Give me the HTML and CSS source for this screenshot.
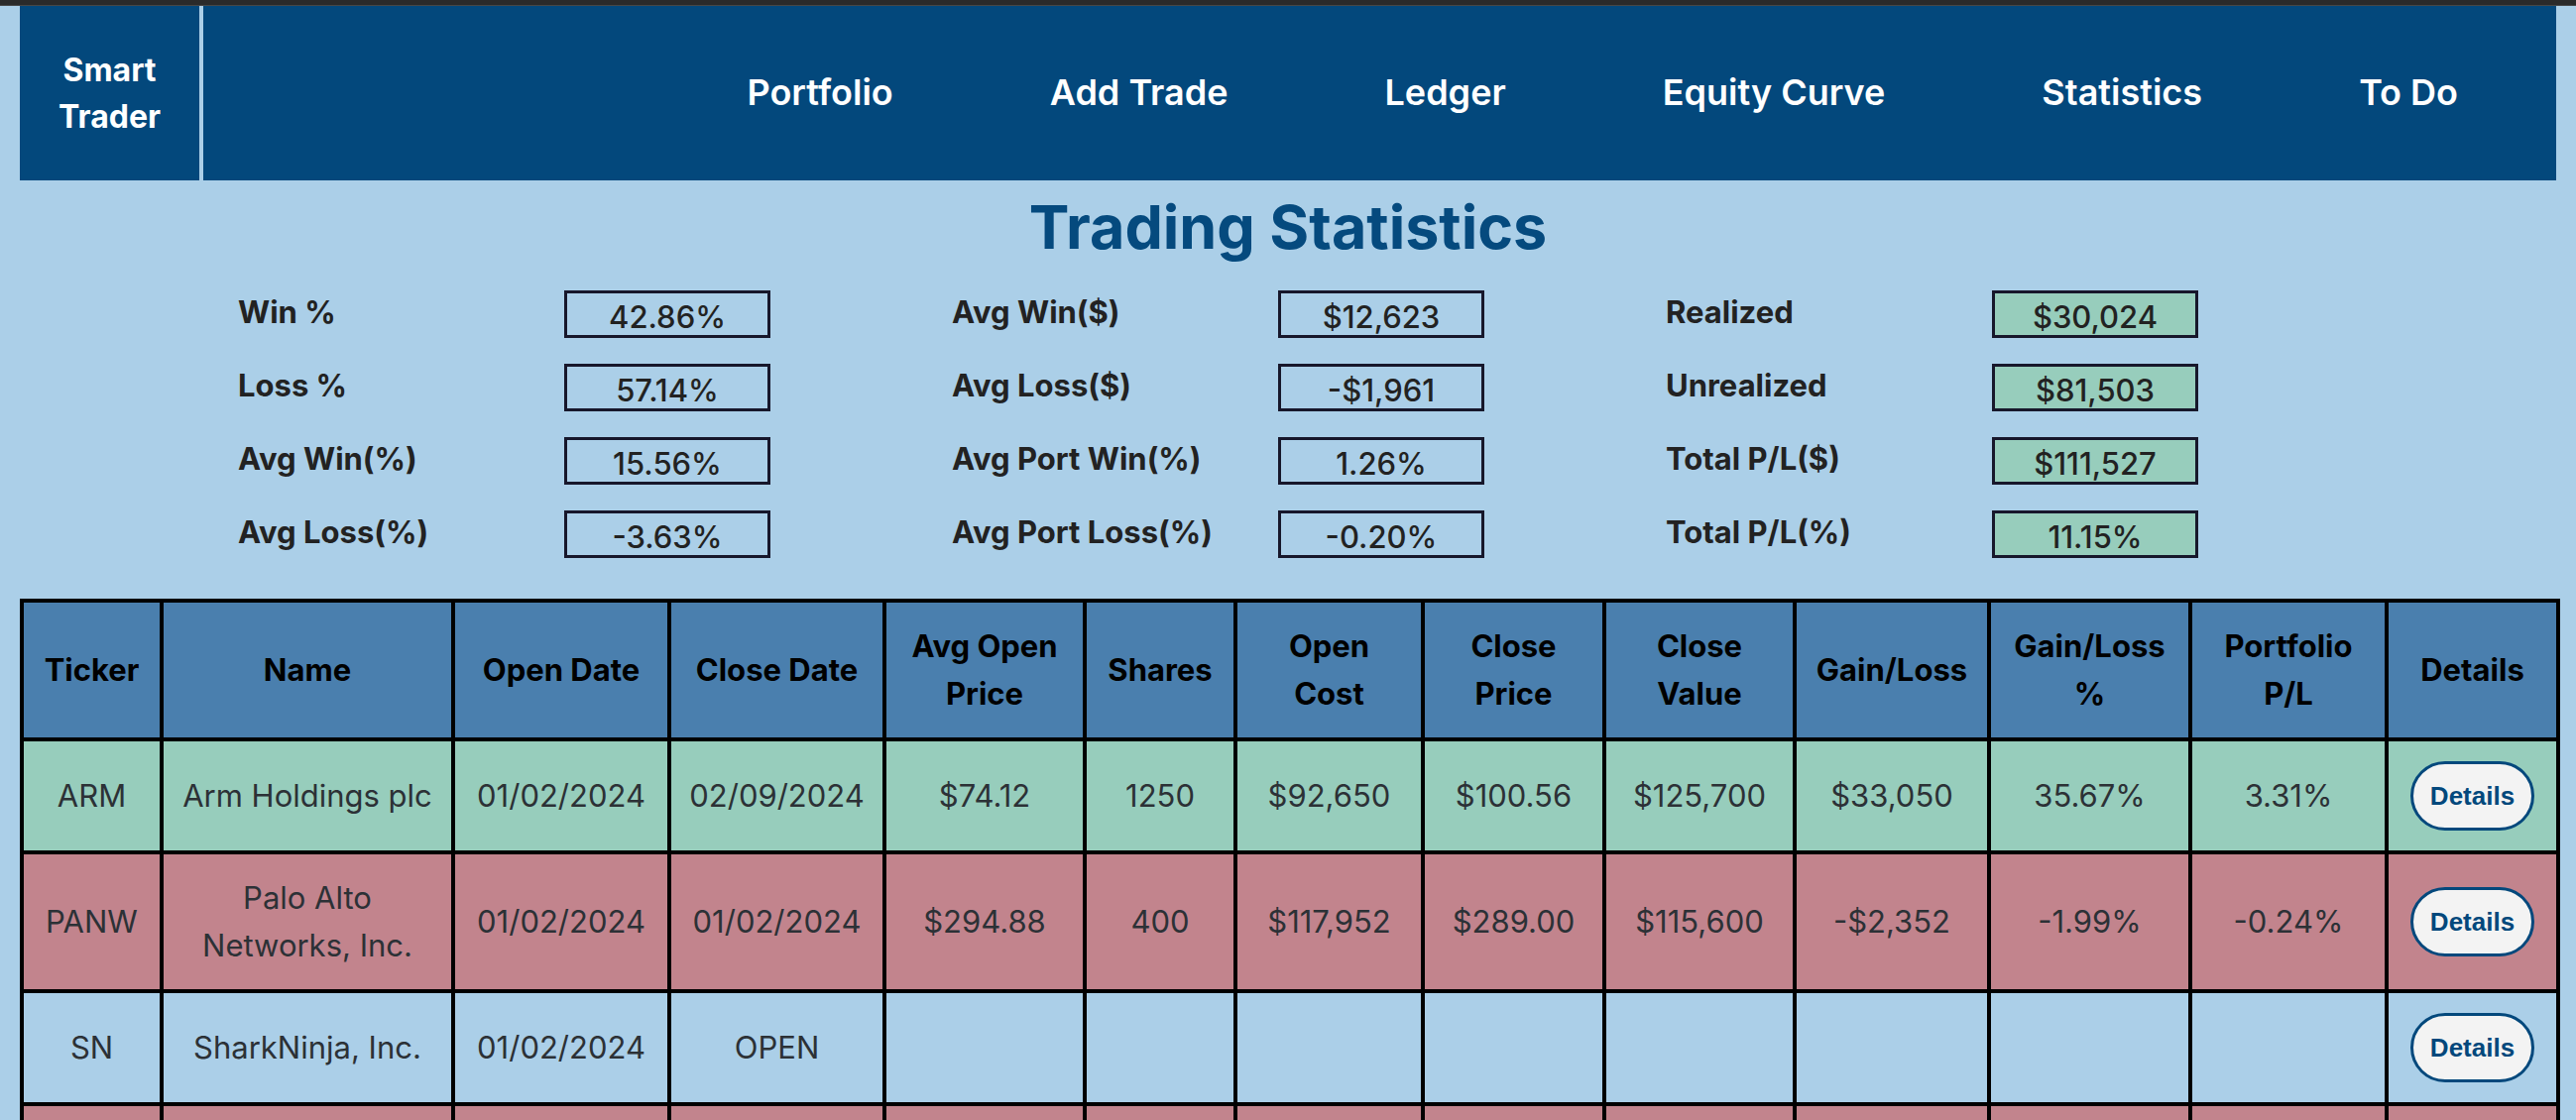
FILE: index.html
```html
<!DOCTYPE html>
<html lang="en">
<head>
  <meta charset="UTF-8" />
  <meta name="viewport" content="width=device-width, initial-scale=1.0"/>
  <title>Smart Trader - Statistics</title>
  <link rel="stylesheet" href="styles.css">
</head>
<body>

  <div class="topbar"></div>

  <div class="page">
    <nav class="navbar">
      <div class="brand">Smart<br>Trader</div>
      <ul class="nav-links">
        <li><a href="#">Portfolio</a></li>
        <li><a href="#">Add Trade</a></li>
        <li><a href="#">Ledger</a></li>
        <li><a href="#">Equity Curve</a></li>
        <li><a href="#">Statistics</a></li>
        <li><a href="#">To Do</a></li>
      </ul>
    </nav>

    <h1 class="title">Trading Statistics</h1>

    <div class="stats">
      <div class="stat-group">
        <div class="stat-label">Win %</div>
        <div class="stat-box">42.86%</div>
        <div class="stat-label">Loss %</div>
        <div class="stat-box">57.14%</div>
        <div class="stat-label">Avg Win(%)</div>
        <div class="stat-box">15.56%</div>
        <div class="stat-label">Avg Loss(%)</div>
        <div class="stat-box">-3.63%</div>
      </div>
      <div class="stat-group">
        <div class="stat-label">Avg Win($)</div>
        <div class="stat-box">$12,623</div>
        <div class="stat-label">Avg Loss($)</div>
        <div class="stat-box">-$1,961</div>
        <div class="stat-label">Avg Port Win(%)</div>
        <div class="stat-box">1.26%</div>
        <div class="stat-label">Avg Port Loss(%)</div>
        <div class="stat-box">-0.20%</div>
      </div>
      <div class="stat-group">
        <div class="stat-label">Realized</div>
        <div class="stat-box positive">$30,024</div>
        <div class="stat-label">Unrealized</div>
        <div class="stat-box positive">$81,503</div>
        <div class="stat-label">Total P/L($)</div>
        <div class="stat-box positive">$111,527</div>
        <div class="stat-label">Total P/L(%)</div>
        <div class="stat-box positive">11.15%</div>
      </div>
    </div>

    <table class="trade-table">
      <colgroup>
        <col style="width: 141px">
        <col style="width: 294px">
        <col style="width: 218px">
        <col style="width: 217px">
        <col style="width: 202px">
        <col style="width: 152px">
        <col style="width: 189px">
        <col style="width: 183px">
        <col style="width: 192px">
        <col style="width: 196px">
        <col style="width: 203px">
        <col style="width: 198px">
        <col style="width: 173px">
      </colgroup>
      <thead>
        <tr>
          <th>Ticker</th>
          <th>Name</th>
          <th>Open Date</th>
          <th>Close Date</th>
          <th>Avg Open Price</th>
          <th>Shares</th>
          <th>Open Cost</th>
          <th>Close Price</th>
          <th>Close Value</th>
          <th>Gain/Loss</th>
          <th>Gain/Loss %</th>
          <th>Portfolio P/L</th>
          <th>Details</th>
        </tr>
      </thead>
      <tbody>
        <tr class="win">
          <td>ARM</td>
          <td>Arm Holdings plc</td>
          <td>01/02/2024</td>
          <td>02/09/2024</td>
          <td>$74.12</td>
          <td>1250</td>
          <td>$92,650</td>
          <td>$100.56</td>
          <td>$125,700</td>
          <td>$33,050</td>
          <td>35.67%</td>
          <td>3.31%</td>
          <td><button class="details-btn">Details</button></td>
        </tr>
        <tr class="loss">
          <td>PANW</td>
          <td>Palo Alto Networks, Inc.</td>
          <td>01/02/2024</td>
          <td>01/02/2024</td>
          <td>$294.88</td>
          <td>400</td>
          <td>$117,952</td>
          <td>$289.00</td>
          <td>$115,600</td>
          <td>-$2,352</td>
          <td>-1.99%</td>
          <td>-0.24%</td>
          <td><button class="details-btn">Details</button></td>
        </tr>
        <tr class="open">
          <td>SN</td>
          <td>SharkNinja, Inc.</td>
          <td>01/02/2024</td>
          <td>OPEN</td>
          <td></td>
          <td></td>
          <td></td>
          <td></td>
          <td></td>
          <td></td>
          <td></td>
          <td></td>
          <td><button class="details-btn">Details</button></td>
        </tr>
        <tr class="loss">
          <td>SNOW</td>
          <td>Snowflake Inc.</td>
          <td>01/03/2024</td>
          <td>01/05/2024</td>
          <td>$193.40</td>
          <td>300</td>
          <td>$58,020</td>
          <td>$187.75</td>
          <td>$56,325</td>
          <td>-$1,695</td>
          <td>-2.92%</td>
          <td>-0.17%</td>
          <td><button class="details-btn">Details</button></td>
        </tr>
      </tbody>
    </table>
  </div>

</body>
</html>
```

FILE: styles.css
```css
* {
  box-sizing: border-box;
  margin: 0;
  padding: 0;
}

body {
  background-color: #abcfe8;
  font-family: Inter, "Noto Sans", sans-serif;
  color: #2c3136;
  line-height: 1.6;
}

.topbar {
  height: 6px;
  background-color: #2a2a2a;
  border-bottom: 1px solid #474747;
}

.page {
  padding: 0 20px;
}

/* navigation */
.navbar {
  display: flex;
  align-items: stretch;
  height: 176px;
  background-color: #03487c;
  color: #fff;
}

.brand {
  width: 185px;
  display: flex;
  align-items: center;
  justify-content: center;
  text-align: center;
  font-size: 32px;
  font-weight: 700;
  line-height: 47px;
  border-right: 4px solid #abcfe8;
}

.nav-links {
  flex: 1;
  display: flex;
  align-items: center;
  justify-content: flex-end;
  gap: 158px;
  padding-right: 99px;
  list-style: none;
}

.nav-links a {
  color: #fff;
  text-decoration: none;
  font-size: 36px;
  font-weight: 600;
}

/* stats */
.title {
  text-align: center;
  color: #054a7e;
  font-size: 61px;
  font-weight: 700;
  line-height: 1.2;
  margin-top: 11px;
}

.stats {
  display: flex;
  padding-left: 220px;
  margin-top: 27px;
}

.stat-group {
  width: 720px;
  display: grid;
  grid-template-columns: 329px 208px;
  row-gap: 26px;
  align-items: center;
}

.stat-label {
  font-size: 31px;
  font-weight: 700;
  color: #222;
  line-height: 36px;
  padding-bottom: 4px;
}

.stat-box {
  height: 48px;
  border: 3px solid #17172b;
  text-align: center;
  font-size: 31px;
  font-weight: 500;
  color: #222;
  line-height: 36px;
  padding-top: 6px;
}

.stat-box.positive {
  background-color: #97cdbc;
}

/* trades table */
.trade-table {
  width: 100%;
  margin-top: 41px;
  border-collapse: collapse;
  table-layout: fixed;
  border: 4px solid #000;
}

.trade-table th,
.trade-table td {
  border: 4px solid #000;
  padding: 20px 10px;
  text-align: center;
  vertical-align: middle;
  font-size: 31px;
  line-height: 48px;
}

.trade-table th {
  padding: 20px 14px;
  background-color: #4a7fae;
  color: #000;
  font-weight: 700;
}

.trade-table tr.win td {
  background-color: #97cdbc;
}

.trade-table tr.loss td {
  background-color: #c2848d;
}

.trade-table tr.open td {
  background-color: #abcfe8;
}

.details-btn {
  display: inline-block;
  vertical-align: middle;
  font-family: "Liberation Sans", Arial, sans-serif;
  font-size: 26px;
  font-weight: bold;
  line-height: 30px;
  color: #03487c;
  background-color: #f3f3f3;
  border: 3px solid #03487c;
  border-radius: 36px;
  padding: 17px 17px;
  cursor: pointer;
}
```
